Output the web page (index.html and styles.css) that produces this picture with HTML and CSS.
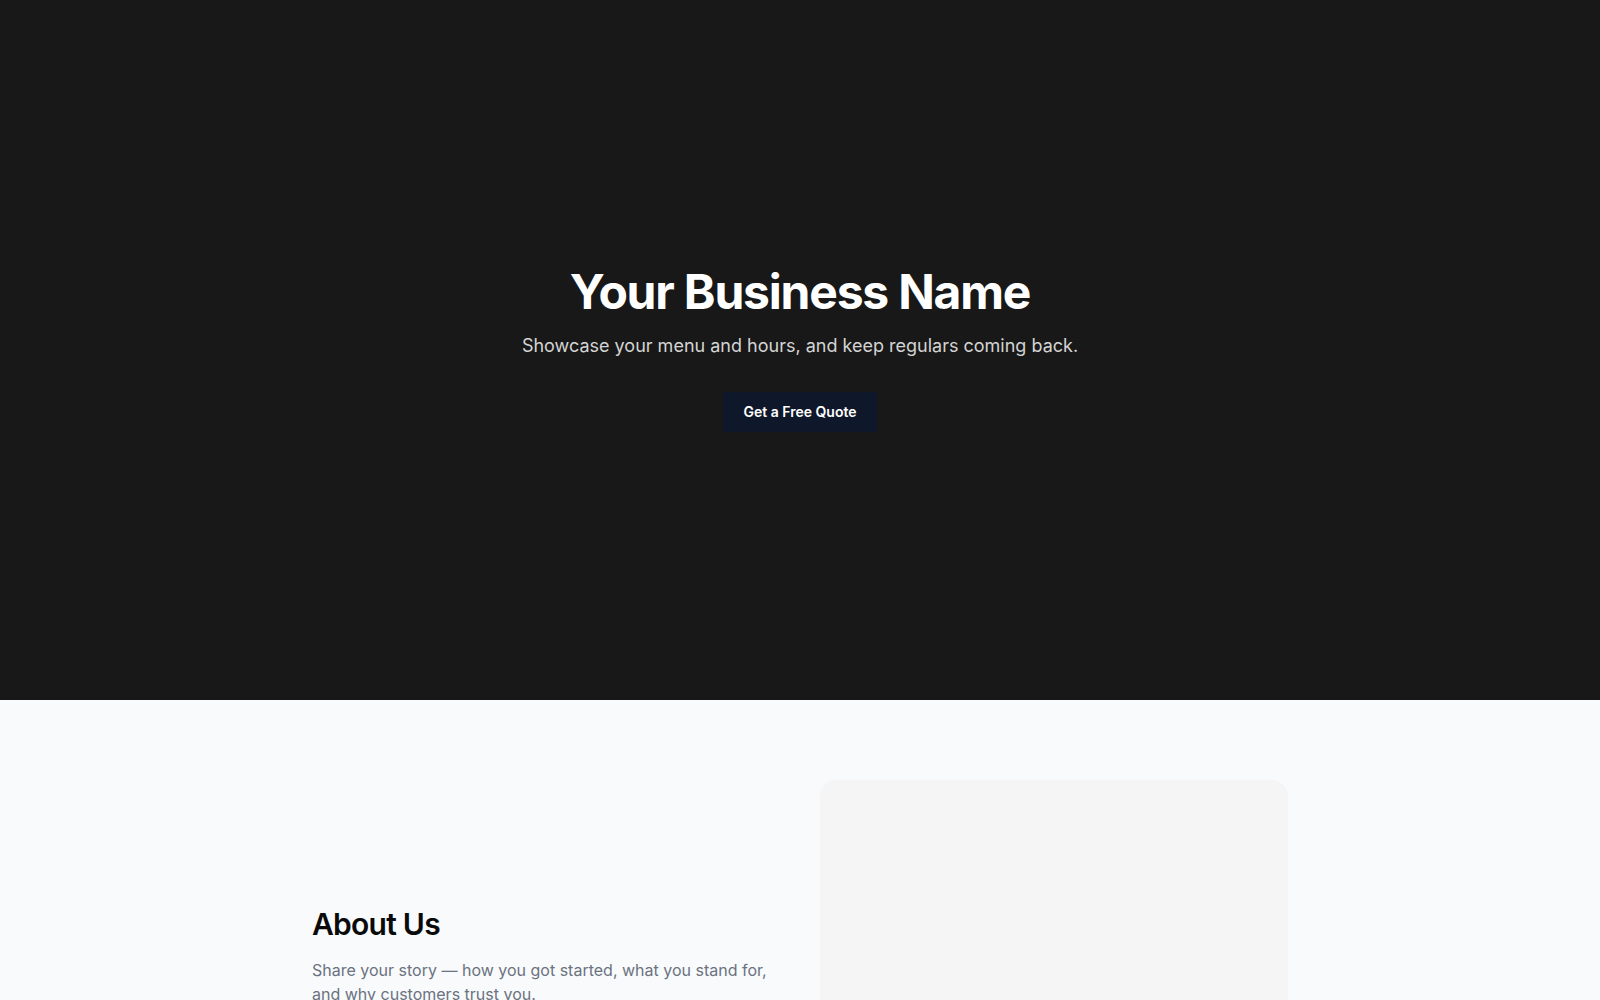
FILE: index.html
```html
<!DOCTYPE html>
<html lang="en">
<head>
    <meta charset="UTF-8">
    <meta name="viewport" content="width=device-width, initial-scale=1.0">
    <title>Your Business Name</title>
    <link rel="stylesheet" href="styles.css">
</head>
<body>
    <section class="hero">
        <div class="hero-content">
            <h1>Your Business Name</h1>
            <p class="tagline">Showcase your menu and hours, and keep regulars coming back.</p>
            <a href="#contact" class="btn">Get a Free Quote</a>
        </div>
    </section>

    <section class="about" id="about">
        <div class="container about-grid">
            <div class="about-text">
                <h2>About Us</h2>
                <p>Share your story — how you got started, what you stand for, and why customers trust you.</p>
            </div>
            <div class="about-photo"></div>
        </div>
    </section>
</body>
</html>
```

FILE: styles.css
```css
* {
    box-sizing: border-box;
    margin: 0;
    padding: 0;
}

body {
    font-family: Inter, "Noto Sans", Arial, sans-serif;
    background-color: #f8fafc;
    color: #0a0a0a;
}

.container {
    max-width: 1024px;
    margin: 0 auto;
    padding: 0 24px;
}

/* hero */
.hero {
    min-height: 70vh;
    background-color: #181818;
    display: flex;
    align-items: center;
    justify-content: center;
    text-align: center;
    padding: 0 24px;
}

.hero h1 {
    color: #fff;
    font-size: 48px;
    line-height: 1;
    font-weight: 700;
    letter-spacing: -0.025em;
}

.tagline {
    margin-top: 16px;
    color: #d4d4d4;
    font-size: 18px;
    line-height: 28px;
}

.btn {
    display: inline-block;
    margin-top: 32px;
    padding: 10px 20px;
    background-color: #0f172a;
    color: #fff;
    font-size: 14px;
    line-height: 20px;
    font-weight: 600;
    text-decoration: none;
}

/* about */
.about {
    padding: 80px 0;
}

.about-grid {
    display: grid;
    grid-template-columns: 1fr 1fr;
    gap: 40px;
    align-items: center;
}

.about-text h2 {
    font-size: 30px;
    line-height: 36px;
    font-weight: 600;
    letter-spacing: -0.025em;
    margin-bottom: 16px;
}

.about-text p {
    color: #6b7280;
    font-size: 16px;
    line-height: 24px;
}

.about-photo {
    aspect-ratio: 4 / 3;
    background-color: #f5f5f5;
    border-radius: 16px;
}
```
